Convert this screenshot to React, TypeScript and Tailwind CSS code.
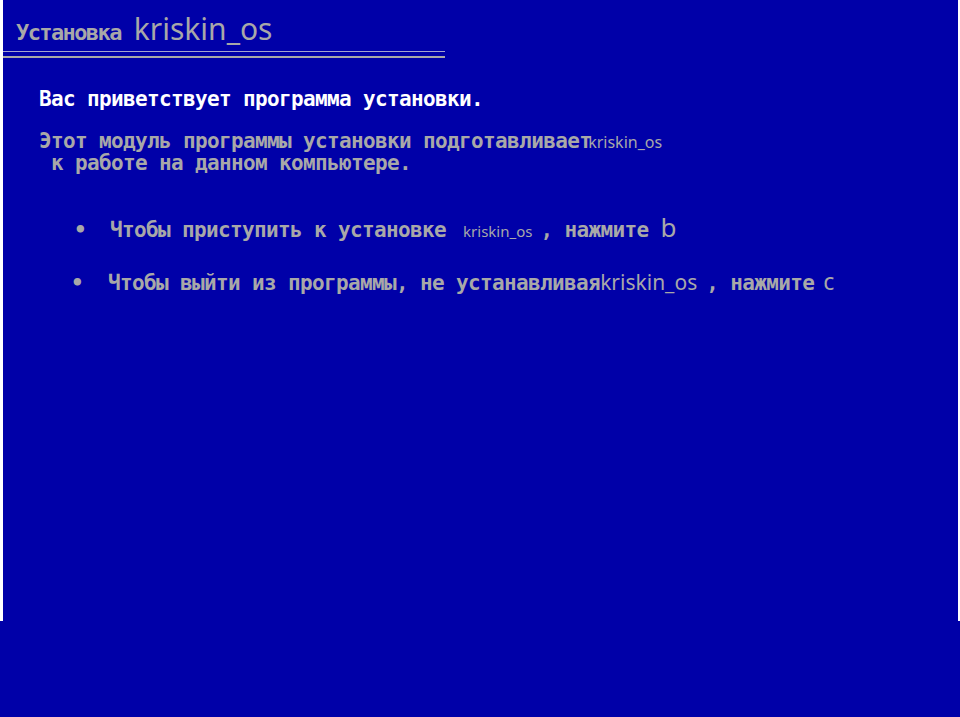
const MONO = "font-['DejaVu_Sans_Mono',monospace] font-bold text-[21px] leading-[22px] tracking-[-0.64px]";
const SANS = "font-['Noto_Sans',sans-serif] leading-none font-normal";

function Bullet({ text, name, nameSize, gap, keyName, keySize, keyGap, indent, textLeft }: {
  text: string; name: string; nameSize: string; gap: string; keyName: string; keySize: string; keyGap: string; indent: string; textLeft: string;
}) {
  return (
    <div className={`flex items-baseline ${indent}`}>
      <span className={`${MONO} text-[#a8a8a8] ${textLeft}`}>•</span>
      <span className={`${MONO} text-[#a8a8a8]`}>{text}</span>
      <span className={`${SANS} ${nameSize} text-[#a8a8a8] ${gap}`}>{name}</span>
      <span className={`${MONO} text-[#a8a8a8] whitespace-pre`}>{", нажмите"}</span>
      <span className={`${SANS} ${keySize} text-[#a8a8a8] ${keyGap}`}>{keyName}</span>
    </div>
  );
}

export default function App() {
  return (
    <div className="w-[960px] h-[717px] bg-[#0000a8] overflow-hidden">
      <div className="h-[621px] flex">
        <div className="w-[3px] bg-white" />
        <div className="flex-1 flex flex-col">
          {/* title */}
          <div className="h-[51px] pt-[14px] pl-[13px] flex items-baseline">
            <span className="font-['DejaVu_Sans_Mono',monospace] font-bold text-[22px] leading-[22px] tracking-[-1.6px] text-[#a8a8a8]">Установка</span>
            <span className={`${SANS} text-[30px] text-[#a8a8a8] ml-[13px]`}>kriskin_os</span>
          </div>
          <div className="w-[442px] h-[1px] bg-[#a4a4d0]" />
          <div className="w-[442px] h-[2px] bg-[#a8a8a8] mt-[4px]" />

          <div className="pl-[36px] mt-[30px]">
            <p className={`${MONO} text-white`}>Вас приветствует программа установки.</p>
            <div className="mt-[20px] flex items-baseline">
              <span className={`${MONO} text-[#a8a8a8]`}>Этот модуль программы установки подготавливает</span>
              <span className={`${SANS} text-[16px] text-[#a8a8a8] -ml-[3px]`}>kriskin_os</span>
            </div>
            <p className={`${MONO} text-[#a8a8a8] whitespace-pre`}>{" к работе на данном компьютере."}</p>
          </div>

          <div className="mt-[40px]">
            <Bullet
              text={"   Чтобы приступить к установке"}
              name="kriskin_os"
              nameSize="text-[15px]"
              gap="ml-[17px] mr-[8px]"
              keyName="b"
              keySize="text-[26px]"
              keyGap="ml-[12px]"
              indent="pl-[71px]"
              textLeft="w-[36px]"
            />
          </div>
          <div className="mt-[29px]">
            <Bullet
              text={"Чтобы выйти из программы, не устанавливая"}
              name="kriskin_os"
              nameSize="text-[21px]"
              gap="mr-[9px]"
              keyName="c"
              keySize="text-[23px]"
              keyGap="ml-[9px]"
              indent="pl-[68px]"
              textLeft="w-[37px]"
            />
          </div>
        </div>
        <div className="w-[2px] bg-white" />
      </div>
    </div>
  );
}
